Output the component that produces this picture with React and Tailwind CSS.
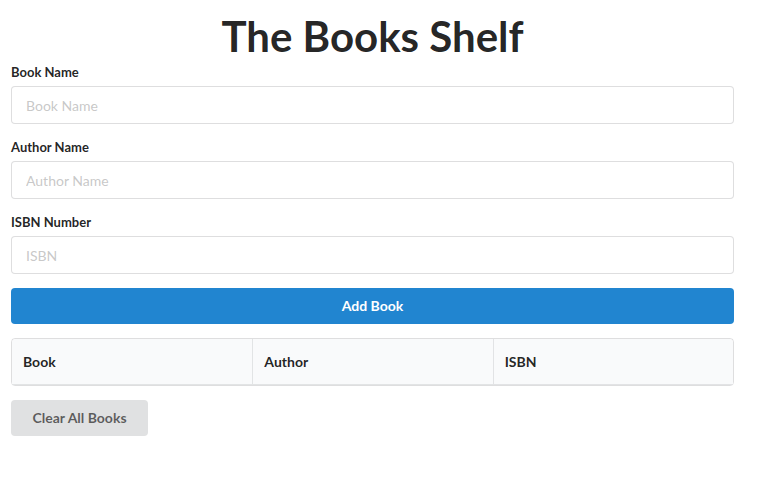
const Field = ({ label, placeholder }) => {
  return (
    <div className="mb-[14px]">
      <label className="mb-[4px] block text-[13px] font-bold leading-[19px] text-[rgba(0,0,0,0.87)]">
        {label}
      </label>
      <input
        type="text"
        placeholder={placeholder}
        className="block h-[38px] w-full rounded-[4px] border border-[rgba(34,36,38,0.15)] bg-white px-[14px] text-[14px] leading-[17px] text-[rgba(0,0,0,0.87)] outline-none placeholder:text-[rgba(191,191,191,0.87)]"
      />
    </div>
  );
};

const App = () => {
  return (
    <div className="min-h-[477px] bg-white font-['Lato','Helvetica_Neue',Arial,sans-serif] text-[14px]">
      <div className="ml-[11px] w-[723px]">
        <h1 className="pt-[9px] text-center text-[42px] font-bold leading-[54px] text-[rgba(0,0,0,0.87)]">
          The Books Shelf
        </h1>

        <form onSubmit={(e) => e.preventDefault()}>
          <Field label="Book Name" placeholder="Book Name" />
          <Field label="Author Name" placeholder="Author Name" />
          <Field label="ISBN Number" placeholder="ISBN" />
          <button
            type="submit"
            className="block h-[36px] w-full rounded-[4px] bg-[#2185d0] text-[14px] font-bold leading-[14px] text-white"
          >
            Add Book
          </button>
        </form>

        <table className="mt-[14px] w-full table-fixed border-separate border-spacing-0 rounded-[4px] border border-[rgba(34,36,38,0.15)] text-left">
          <thead>
            <tr>
              <th className="rounded-tl-[4px] border-b border-[rgba(34,36,38,0.1)] bg-[#f9fafb] px-[11px] py-[13px] text-[14px] font-bold leading-[19px] text-[rgba(0,0,0,0.87)]">
                Book
              </th>
              <th className="border-b border-l border-[rgba(34,36,38,0.1)] bg-[#f9fafb] px-[11px] py-[13px] text-[14px] font-bold leading-[19px] text-[rgba(0,0,0,0.87)]">
                Author
              </th>
              <th className="rounded-tr-[4px] border-b border-l border-[rgba(34,36,38,0.1)] bg-[#f9fafb] px-[11px] py-[13px] text-[14px] font-bold leading-[19px] text-[rgba(0,0,0,0.87)]">
                ISBN
              </th>
            </tr>
          </thead>
        </table>

        <button
          type="button"
          className="mt-[14px] h-[36px] w-[137px] rounded-[4px] bg-[#e0e1e2] text-[14px] font-bold leading-[14px] text-[rgba(0,0,0,0.6)]"
        >
          Clear All Books
        </button>
      </div>
    </div>
  );
};

export default App;
